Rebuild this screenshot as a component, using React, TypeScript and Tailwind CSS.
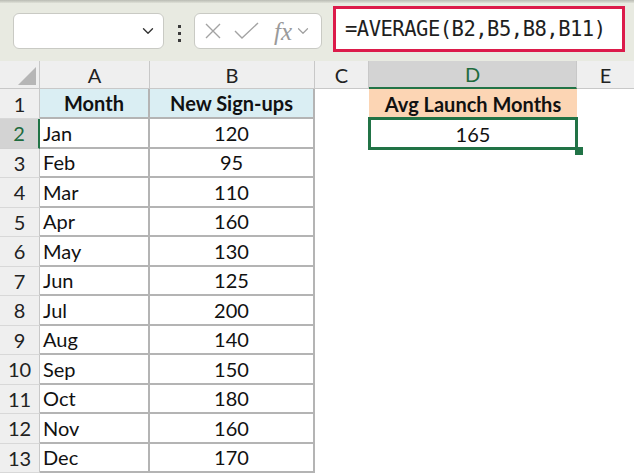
import { ChevronDown } from "lucide-react";

const months = [
  ["Jan", 120],
  ["Feb", 95],
  ["Mar", 110],
  ["Apr", 160],
  ["May", 130],
  ["Jun", 125],
  ["Jul", 200],
  ["Aug", 140],
  ["Sep", 150],
  ["Oct", 180],
  ["Nov", 160],
  ["Dec", 170],
] as const;

const cellFont = { fontFamily: "Lato, 'Noto Sans', sans-serif" };

const Toolbar = () => (
  <div className="relative h-[61px] bg-[#e8eae1]">
    <div className="h-[3px] bg-gradient-to-b from-[#b9bbb3] to-[#dfe1d8]" />
    <div className="flex items-start">
      <div className="ml-[13px] mt-[10px] flex h-[36px] w-[151px] items-center justify-end rounded-[6px] border border-[#c9cac4] bg-white pr-[6px]">
        <ChevronDown className="h-[18px] w-[18px] text-[#333]" strokeWidth={1.8} />
      </div>
      <div className="ml-[14px] mt-[22px] flex flex-col gap-[4px]">
        <span className="h-[3px] w-[3px] bg-[#3b3b3b]" />
        <span className="h-[3px] w-[3px] bg-[#3b3b3b]" />
        <span className="h-[3px] w-[3px] bg-[#3b3b3b]" />
      </div>
      <div className="ml-[13px] mt-[10px] flex h-[36px] w-[128px] items-center rounded-[6px] border border-[#c9cac4] bg-white pl-[8px]">
        <svg width="18" height="18" viewBox="0 0 18 18" className="ml-[1px]">
          <path d="M2 2 L16 16 M16 2 L2 16" stroke="#a3a3a3" strokeWidth="1.4" fill="none" />
        </svg>
        <svg width="26" height="18" viewBox="0 0 26 18" className="ml-[12px]">
          <path d="M1 9 L8 16 L24 1" stroke="#a3a3a3" strokeWidth="1.4" fill="none" />
        </svg>
        <span
          className="ml-[14px] text-[25px] italic leading-none text-[#9a9a9a]"
          style={{ fontFamily: "'Liberation Serif', 'DejaVu Serif', serif" }}
        >
          fx
        </span>
        <ChevronDown className="ml-[2px] h-[18px] w-[18px] text-[#a0a0a0]" strokeWidth={1.6} />
      </div>
      <div className="ml-[11px] mt-[3px] flex h-[46px] w-[292px] items-center border-[3px] border-[#dc1b4a] bg-white pl-[9px]">
        <span
          className="text-[20.5px] leading-none tracking-[-0.5px] text-[#1e1e1e]"
          style={{ fontFamily: "'DejaVu Sans Mono', 'Liberation Mono', monospace" }}
        >
          =AVERAGE(B2,B5,B8,B11)
        </span>
      </div>
    </div>
  </div>
);

const ColHeader = () => (
  <div className="flex h-[28px] bg-[#efefef] text-[20px] text-[#222]" style={cellFont}>
    <div className="relative w-[40px] shrink-0 border-r border-b border-[#c8c8c8]">
      <div
        className="absolute bottom-[3px] right-[3px] h-[18px] w-[18px] bg-[#b6b6b6]"
        style={{ clipPath: "polygon(100% 0, 100% 100%, 0 100%)" }}
      />
    </div>
    <div className="flex w-[110px] shrink-0 items-center justify-center border-r border-b border-[#c8c8c8]">A</div>
    <div className="flex w-[165px] shrink-0 items-center justify-center border-r border-b border-[#c8c8c8]">B</div>
    <div className="flex w-[54px] shrink-0 items-center justify-center border-r border-b border-[#c8c8c8]">C</div>
    <div className="flex w-[208px] shrink-0 items-center justify-center border-b-2 border-r border-[#217346] border-r-[#c8c8c8] bg-[#d3d3d3] text-[#1e6b3e]">
      D
    </div>
    <div className="flex w-[57px] shrink-0 items-center justify-center border-b border-[#c8c8c8]">E</div>
  </div>
);

const RowHead = ({ n, active }: { n: number; active?: boolean }) => (
  <div
    className={
      active
        ? "flex w-[40px] shrink-0 items-center justify-center border-r-2 border-b border-[#217346] border-b-[#d0d0d0] bg-[#d3d3d3] text-[#1e6b3e]"
        : "flex w-[40px] shrink-0 items-center justify-center border-r border-b border-[#c8c8c8] border-b-[#d8d8d8] bg-[#efefef] text-[#222]"
    }
  >
    {n}
  </div>
);

export default function App() {
  return (
    <div className="h-[475px] w-[634px] overflow-hidden bg-white">
      <Toolbar />
      <ColHeader />
      <div className="text-[20px] text-[#111]" style={cellFont}>
        <div className="flex h-[30px]">
          <RowHead n={1} />
          <div className="flex w-[110px] shrink-0 items-center justify-center border-r-2 border-b-2 border-[#b4b4b4] bg-[#daeef3] font-bold">
            Month
          </div>
          <div className="flex w-[165px] shrink-0 items-center justify-center border-r-2 border-b-2 border-[#b4b4b4] bg-[#daeef3] font-bold">
            New Sign-ups
          </div>
          <div className="w-[54px] shrink-0" />
          <div className="flex w-[208px] shrink-0 items-center justify-center bg-[#fcd5b4] font-bold">
            Avg Launch Months
          </div>
        </div>
        {months.map(([m, v], i) => (
          <div key={m} className="relative flex h-[29.5px]">
            <RowHead n={i + 2} active={i === 0} />
            <div className="flex w-[110px] shrink-0 items-center border-r-2 border-b-2 border-[#b4b4b4] pl-[3px]">
              {m}
            </div>
            <div className="flex w-[165px] shrink-0 items-center justify-center border-r-2 border-b-2 border-[#b4b4b4]">
              {v}
            </div>
            <div className="w-[54px] shrink-0" />
            {i === 0 && (
              <div className="relative z-10 -mt-[2px] -ml-[1px] h-[33px] w-[210px] shrink-0">
                <div className="flex h-full w-full items-center justify-center border-[3px] border-[#217346]">165</div>
                <div className="absolute right-[-5px] bottom-[-5px] h-[8px] w-[8px] bg-[#217346]" />
              </div>
            )}
          </div>
        ))}
      </div>
    </div>
  );
}
